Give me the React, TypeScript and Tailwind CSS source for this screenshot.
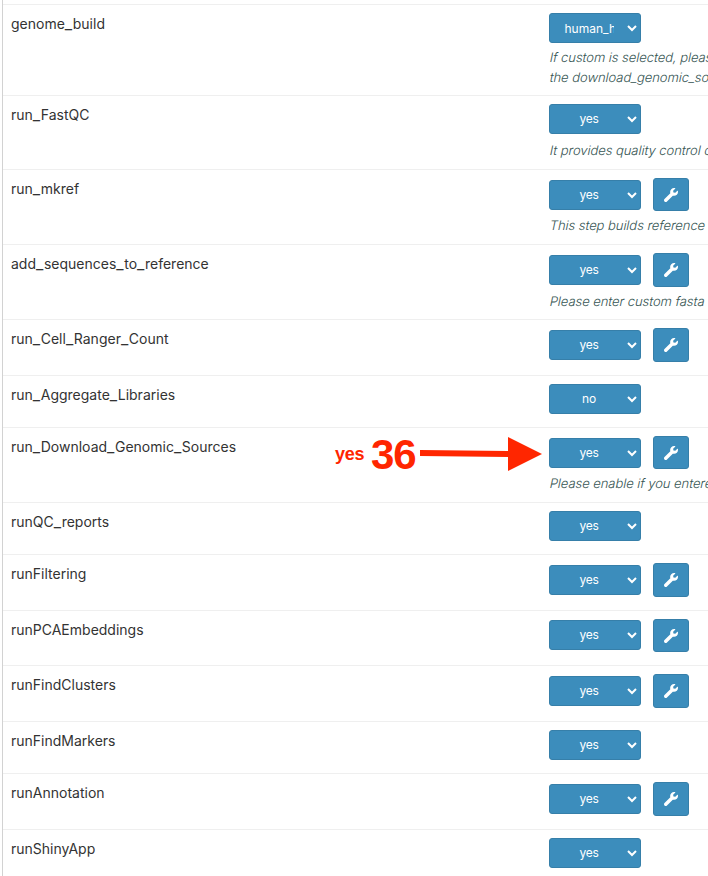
import { Fragment } from "react";

type Row = {
  name: string;
  height: string;
  value: string;
  settings?: string;
  selectGap?: string;
  help?: string[];
  helpGap?: string;
  note?: boolean;
};

const rows: Row[] = [
  { name: "genome_build", height: "h-[91px]", value: "human_h", help: ["If custom is selected, pleas", "the download_genomic_so"], helpGap: "mt-[4px]" },
  { name: "run_FastQC", height: "h-[74px]", value: "yes", help: ["It provides quality control c"], helpGap: "mt-[6px]" },
  { name: "run_mkref", height: "h-[75px]", value: "yes", settings: "h-[33px]", help: ["This step builds reference"], helpGap: "mt-[4px]" },
  { name: "add_sequences_to_reference", height: "h-[75px]", value: "yes", settings: "h-[34px]", help: ["Please enter custom fasta"], helpGap: "mt-[4px]" },
  { name: "run_Cell_Ranger_Count", height: "h-[56px]", value: "yes", settings: "h-[34px]" },
  { name: "run_Aggregate_Libraries", height: "h-[52px]", value: "no" },
  { name: "run_Download_Genomic_Sources", height: "h-[75px]", value: "yes", settings: "h-[33px]", help: ["Please enable if you entere"], helpGap: "mt-[4px]", note: true },
  { name: "runQC_reports", height: "h-[52px]", value: "yes" },
  { name: "runFiltering", height: "h-[56px]", value: "yes", settings: "h-[34px]" },
  { name: "runPCAEmbeddings", height: "h-[55px]", value: "yes", settings: "h-[33px]", selectGap: "pt-[1px]" },
  { name: "runFindClusters", height: "h-[56px]", value: "yes", settings: "h-[34px]" },
  { name: "runFindMarkers", height: "h-[52px]", value: "yes" },
  { name: "runAnnotation", height: "h-[56px]", value: "yes", settings: "h-[34px]" },
  { name: "runShinyApp", height: "h-[56px]", value: "yes" },
];

function Label({ name }: { name: string }) {
  return (
    <span>
      {name.split("_").map((part, i) => (
        <Fragment key={i}>
          {i > 0 && <span className="text-[16px] leading-none tracking-[0.6px]">_</span>}
          {part}
        </Fragment>
      ))}
    </span>
  );
}

function Select({ value }: { value: string }) {
  const long = value.length > 3;
  return (
    <button className="flex h-[30px] w-[92px] shrink-0 items-center rounded-[3px] border border-[#367fa9] bg-[#3c8dbc] pl-[14px] text-[12px] leading-[18px] text-white">
      <span className={`w-[50px] overflow-hidden whitespace-nowrap ${long ? "pl-[0.5px] pt-px text-left" : "text-center tracking-[-0.2px]"}`}>{value}</span>
      <svg className="ml-[13px] shrink-0" width="10" height="8" viewBox="0 0 10 8" fill="none" stroke="white" strokeWidth="2">
        <path d="M1 2 5 6 9 2" />
      </svg>
    </button>
  );
}

function Wrench() {
  return (
    <svg width="14" height="14" viewBox="0 0 512 512" fill="white">
      <path d="M507.73 109.1c-2.24-9.03-13.54-12.09-20.12-5.51l-74.36 74.36-67.88-11.31-11.31-67.88 74.36-74.36c6.62-6.62 3.43-17.9-5.66-20.16-47.38-11.74-99.55.91-136.58 37.93-39.64 39.64-50.55 97.1-34.05 147.2L18.74 402.76c-24.99 24.99-24.99 65.51 0 90.5 24.99 24.99 65.51 24.99 90.5 0l213.21-213.21c50.12 16.71 107.47 5.68 147.37-34.22 37.07-37.07 49.7-89.32 37.91-136.73z" />
    </svg>
  );
}

function Annotation() {
  return (
    <div className="absolute left-[332px] top-[3px] flex h-[46px] w-[209px] items-center font-['Liberation_Sans',sans-serif] font-bold text-[#ff2600]">
      <span className="w-[36px] text-[18px] leading-[20px] tracking-[-0.3px]">yes</span>
      <span className="w-[48px] pt-[2px] text-[42px] leading-[44px] tracking-[-1px]">36</span>
      <svg className="shrink-0" width="124" height="36" viewBox="0 0 124 36" fill="#ff2600">
        <path d="M1 14 89 15V1l34 17-34 17V21L1 20Z" />
      </svg>
    </div>
  );
}

export default function App() {
  return (
    <main className="h-[876px] w-[708px] overflow-hidden bg-white pl-[2px] font-['Inter','Noto_Sans',sans-serif] text-[#333]">
      <div className="h-full border-l border-[#d2d2d2] pt-[4px]">
        {rows.map((row) => (
          <section key={row.name} className={`relative flex border-t border-[#efefef] ${row.height}`}>
            <div className="w-[546px] shrink-0 pl-[8px] pt-[9px] text-[14px] leading-[20px]">
              <Label name={row.name} />
            </div>
            <div className="min-w-0 pt-[8px]">
              <div className="flex gap-[12px]">
                <div className={row.settings ? row.selectGap ?? "pt-[2px]" : ""}>
                  <Select value={row.value} />
                </div>
                {row.settings && (
                  <button className={`flex w-[36px] items-center justify-center rounded-[3px] border border-[#367fa9] bg-[#3c8dbc] ${row.settings}`} aria-label="Settings">
                    <Wrench />
                  </button>
                )}
              </div>
              {row.help && (
                <div className={`whitespace-nowrap pl-[0.7px] text-[13px] font-light leading-[20px] tracking-[-0.05px] text-[#365553] ${row.helpGap}`}>
                  {row.help.map((line) => (
                    <p key={line} className="w-fit -skew-x-12">{line}</p>
                  ))}
                </div>
              )}
            </div>
            {row.note && <Annotation />}
          </section>
        ))}
      </div>
    </main>
  );
}
